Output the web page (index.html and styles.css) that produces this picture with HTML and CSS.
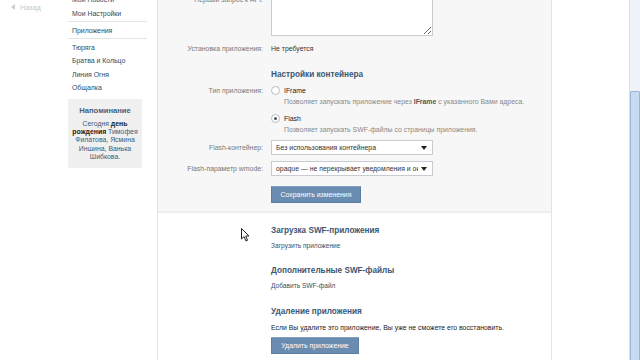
FILE: index.html
```html
<!DOCTYPE html>
<html lang="ru">
<head>
    <meta charset="UTF-8">
    <title>Редактирование приложения</title>
    <link rel="stylesheet" href="styles.css">
</head>
<body>
    <div class="page">
        <div class="back">
            <span class="back-arrow"></span>
            <span>Назад</span>
        </div>

        <nav class="sidebar">
            <a href="#">Мои Новости</a>
            <a href="#">Мои Настройки</a>
            <div class="sep"></div>
            <a href="#">Приложения</a>
            <div class="sep"></div>
            <a href="#">Тюряга</a>
            <a href="#">Братва и Кольцо</a>
            <a href="#">Линия Огня</a>
            <a href="#">Общалка</a>

            <div class="reminder">
                <h4>Напоминание</h4>
                <p>Сегодня <b>день</b><br><b>рождения</b> Тимофея<br>Филатова, Ясмина<br>Иншина, Ванька<br>Шибкова.</p>
            </div>
        </nav>

        <main class="panel">
            <section class="settings">
                <div class="row row-textarea">
                    <label>Первый запрос к API:</label>
                    <textarea></textarea>
                </div>

                <div class="row">
                    <label>Установка приложения:</label>
                    <span class="value">Не требуется</span>
                </div>

                <h3 class="heading heading-container">Настройки контейнера</h3>

                <div class="row row-type">
                    <label>Тип приложения:</label>
                    <div class="options">
                        <div class="option">
                            <span class="radio"></span>
                            <div>
                                <div class="option-name">IFrame</div>
                                <div class="option-desc">Позволяет запускать приложение через <b>IFrame</b> с указанного Вами адреса.</div>
                            </div>
                        </div>
                        <div class="option">
                            <span class="radio checked"></span>
                            <div>
                                <div class="option-name">Flash</div>
                                <div class="option-desc">Позволяет запускать SWF-файлы со страницы приложения.</div>
                            </div>
                        </div>
                    </div>
                </div>

                <div class="row row-select">
                    <label>Flash-контейнер:</label>
                    <div class="select">
                        <span>Без использования контейнера</span>
                        <span class="caret"></span>
                    </div>
                </div>

                <div class="row row-select">
                    <label>Flash-параметр wmode:</label>
                    <div class="select">
                        <span class="select-text">opaque — не перекрывает уведомления и окна</span>
                        <span class="caret"></span>
                    </div>
                </div>

                <div class="row row-button">
                    <span></span>
                    <button class="btn">Сохранить изменения</button>
                </div>
            </section>

            <section class="files">
                <h3 class="heading">Загрузка SWF-приложения</h3>
                <a href="#" class="small-link">Загрузить приложение</a>

                <h3 class="heading">Дополнительные SWF-файлы</h3>
                <a href="#" class="small-link">Добавить SWF-файл</a>

                <h3 class="heading">Удаление приложения</h3>
                <p class="warning">Если Вы удалите это приложение, Вы уже не сможете его восстановить.</p>
                <button class="btn btn-delete">Удалить приложение</button>

                <svg class="cursor" width="9" height="14" viewBox="0 0 9 14">
                    <path d="M0.5 0.5 L0.5 11 L3 8.6 L5 13 L6.6 12.3 L4.7 8 L8 8 Z" fill="#fff" stroke="#222" stroke-width="1"/>
                </svg>
            </section>
        </main>

        <div class="scrollbar">
            <div class="thumb"></div>
        </div>
    </div>
</body>
</html>
```

FILE: styles.css
```css
* {
    margin: 0;
    padding: 0;
    box-sizing: border-box;
}

body {
    font-family: "Liberation Sans", Arial, sans-serif;
    font-size: 6.9px;
    line-height: 9px;
    color: #222;
    background-color: #fff;
    overflow: hidden;
}

a {
    color: #2b587a;
    text-decoration: none;
}

.page {
    display: flex;
    height: 360px;
}

/* back link */
.back {
    width: 68px;
    display: flex;
    align-items: flex-start;
    gap: 5px;
    padding: 3px 0 0 11px;
    color: #c4c8cc;
    font-size: 7.2px;
}

.back-arrow {
    margin-top: 1px;
    width: 0;
    height: 0;
    border-top: 3.5px solid transparent;
    border-bottom: 3.5px solid transparent;
    border-right: 4px solid #c8ccd0;
}

/* left menu */
.sidebar {
    width: 89px;
    display: flex;
    flex-direction: column;
    margin-top: -7px;
}

.sidebar a {
    display: flex;
    align-items: center;
    padding-left: 4px;
    height: 13.5px;
    color: #2e4b66;
}

.sidebar .sep {
    width: 79px;
    height: 1px;
    background: #e4e6e8;
    margin: 1px 0 1.5px 0;
}

.reminder {
    width: 74px;
    margin-top: 4px;
    background: #f0f0f0;
    padding: 7px 2px 6px;
    text-align: center;
    line-height: 8.4px;
    color: #3d5a78;
}

.reminder h4 {
    font-size: 7.6px;
    line-height: 9px;
    color: #45617d;
    margin-bottom: 5px;
}

.reminder b {
    color: #222;
}

/* main panel */
.panel {
    width: 395px;
    border-left: 1px solid #e2e4e6;
    border-right: 1px solid #e2e4e6;
    display: flex;
    flex-direction: column;
}

.settings {
    background: #f7f7f7;
    border-bottom: 2px solid #eceeef;
    padding: 0 0 8px 0;
    margin-top: -5px;
}

.row {
    display: grid;
    grid-template-columns: 105px 1fr;
    column-gap: 8px;
    align-items: center;
}

.row label {
    text-align: right;
    color: #777;
}

.row-textarea {
    align-items: start;
}

.row-textarea textarea {
    width: 162px;
    height: 41px;
    border: 1px solid #c8ccd0;
    background: #fff;
    display: block;
    resize: vertical;
}

.row-textarea + .row {
    margin-top: 8px;
}

.value {
    color: #333;
}

.heading {
    font-size: 8.2px;
    line-height: 10px;
    color: #3b5673;
    font-weight: bold;
    padding-left: 113px;
}

.heading-container {
    margin: 17px 0 6px 0;
}

.row-type {
    align-items: start;
}

.options {
    display: flex;
    flex-direction: column;
    gap: 8px;
}

.option {
    display: flex;
    gap: 4px;
}

.radio {
    width: 9px;
    height: 9px;
    border-radius: 50%;
    border: 1px solid #b8bcc0;
    background: #fff;
    position: relative;
}

.radio.checked::after {
    content: "";
    position: absolute;
    left: 2px;
    top: 2px;
    width: 3px;
    height: 3px;
    border-radius: 50%;
    background: #555;
}

.option-name {
    color: #222;
}

.option-desc {
    color: #888;
    margin-top: 2px;
}

.option-desc b {
    color: #555;
}

.row-select {
    margin-top: 6px;
}

.row-type + .row-select {
    margin-top: 6px;
}

.select {
    width: 162px;
    height: 15px;
    background: #fff;
    border: 1px solid #c8ccd0;
    display: flex;
    align-items: center;
    gap: 3px;
    padding: 0 5px 0 4px;
    color: #333;
    white-space: nowrap;
}

.select span:first-child {
    flex: 1;
    overflow: hidden;
}

.caret {
    flex-shrink: 0;
    width: 0;
    height: 0;
    border-left: 3px solid transparent;
    border-right: 3px solid transparent;
    border-top: 4px solid #222;
}

.row-button {
    margin-top: 10px;
}

.btn {
    width: 90px;
    height: 17px;
    background: #6a8cb0;
    border: 1px solid #5a7ea4;
    border-top-color: #809fc0;
    color: #fff;
    font-family: inherit;
    font-size: 6.9px;
    cursor: pointer;
    border-radius: 1px;
}

.files {
    position: relative;
    flex: 1;
    padding-top: 13px;
    display: flex;
    flex-direction: column;
    align-items: flex-start;
}

.files .heading {
    margin-bottom: 5px;
}

.small-link {
    padding-left: 113px;
    font-size: 6.6px;
    color: #3d4f60;
    margin-bottom: 16px;
}

.small-link + .heading + .small-link {
    margin-bottom: 17px;
}

.warning {
    padding-left: 113px;
    color: #222;
    margin-top: 1px;
    margin-bottom: 5px;
}

.btn-delete {
    margin-left: 113px;
    width: 88px;
}

.cursor {
    position: absolute;
    left: 83px;
    top: 15px;
}

/* window scrollbar */
.scrollbar {
    margin-left: auto;
    width: 11px;
    background: #eef3f9;
    border-left: 1px solid #d8e2ee;
    padding-top: 91px;
}

.thumb {
    height: 280px;
    background: #c9dbf1;
    border: 1px solid #98b4d8;
    border-radius: 1px;
}
```
